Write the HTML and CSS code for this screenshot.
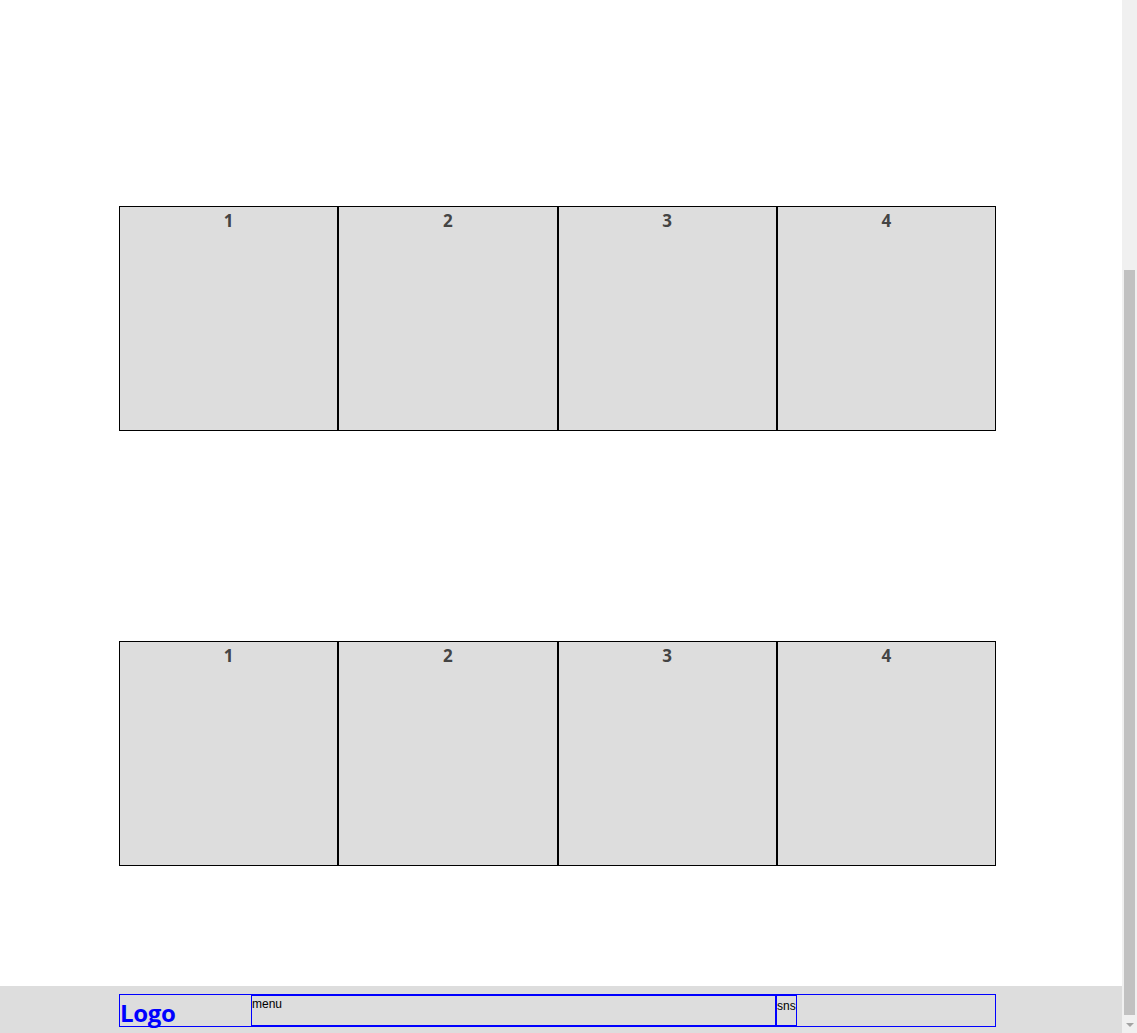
FILE: index.html
```html
<!DOCTYPE html>
<html>
<head>
<meta charset="utf-8">
<link rel="stylesheet" href="styles.css">
</head>
<body>
<div class="page">
  <div class="main">
    <div class="row">
      <div class="box">1</div>
      <div class="box">2</div>
      <div class="box">3</div>
      <div class="box">4</div>
    </div>
    <div class="row row-second">
      <div class="box">1</div>
      <div class="box">2</div>
      <div class="box">3</div>
      <div class="box">4</div>
    </div>
    <footer class="footer">
      <div class="footer-inner">
        <div class="logo">Logo</div>
        <div class="menu">menu</div>
        <div class="sns">sns</div>
      </div>
    </footer>
  </div>
  <div class="scrollbar">
    <div class="sb-up"></div>
    <div class="sb-track"><div class="sb-thumb"></div></div>
    <div class="sb-down"><span class="sb-arrow"></span></div>
  </div>
</div>
</body>
</html>
```

FILE: styles.css
```css
html, body {
  margin: 0;
  padding: 0;
  background: #fff;
}
body {
  font-family: "Open Sans", "Liberation Sans", sans-serif;
  overflow: hidden;
}
.page {
  display: flex;
  width: 1137px;
  height: 1033px;
  overflow: hidden;
}
.main {
  width: 1122px;
  padding-top: 206px;
  box-sizing: border-box;
  display: flex;
  flex-direction: column;
}
.row {
  display: flex;
  margin-left: 119px;
  width: 877px;
}
.row-second {
  margin-top: 210px;
}
.box {
  flex: 1;
  height: 225px;
  box-sizing: border-box;
  border: 1px solid #000;
  background: #dddddd;
  text-align: center;
  color: #444;
  font-weight: 700;
  font-size: 17px;
  line-height: 24px;
  padding-top: 2px;
}
.footer {
  margin-top: 120px;
  background: #dddddd;
  height: 47px;
  box-sizing: border-box;
  padding-top: 8px;
}
.footer-inner {
  margin-left: 119px;
  width: 877px;
  height: 33px;
  box-sizing: border-box;
  border: 1px solid #0000ff;
  display: flex;
}
.logo {
  width: 131px;
  color: #0000ff;
  font-weight: 700;
  font-size: 24px;
  line-height: 25px;
  padding-top: 5px;
  letter-spacing: -0.3px;
  box-sizing: border-box;
  white-space: nowrap;
}
.menu {
  width: 525px;
  box-sizing: border-box;
  border: 1px solid #0000ff;
  font-family: "Liberation Sans", Arial, sans-serif;
  font-size: 12px;
  line-height: 14px;
  padding-top: 1px;
  color: #000;
}
.sns {
  box-sizing: border-box;
  border: 1px solid #0000ff;
  font-family: "Liberation Sans", Arial, sans-serif;
  font-size: 12px;
  line-height: 14px;
  padding-top: 3px;
  color: #000;
}
.scrollbar {
  width: 15px;
  height: 1033px;
  background: #f0f0f0;
  display: flex;
  flex-direction: column;
}
.sb-up {
  height: 17px;
}
.sb-track {
  flex: 1;
  padding-top: 253px;
  padding-left: 2px;
  padding-right: 2px;
  box-sizing: border-box;
}
.sb-thumb {
  height: 745px;
  background: #c1c1c1;
}
.sb-down {
  height: 17px;
  display: flex;
  justify-content: center;
  align-items: center;
}
.sb-arrow {
  width: 0;
  height: 0;
  border-left: 4px solid transparent;
  border-right: 4px solid transparent;
  border-top: 4px solid #a3a3a3;
}
```
